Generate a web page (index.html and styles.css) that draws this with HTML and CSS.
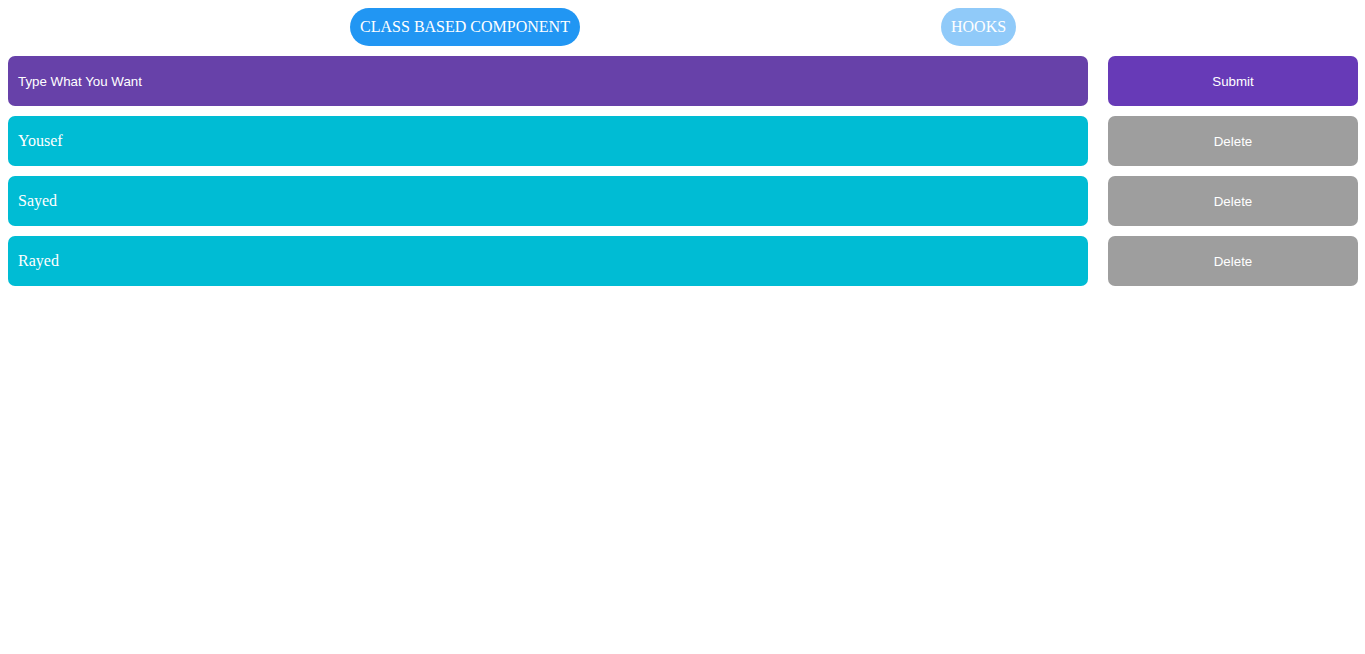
FILE: index.html
```html
<!DOCTYPE html>
<html>
<head>
<meta charset="utf-8">
<link rel="stylesheet" href="styles.css">
</head>
<body>
<div class="app">
  <div class="tabs">
    <button class="tab tab-active">CLASS BASED COMPONENT</button>
    <button class="tab tab-light">HOOKS</button>
  </div>
  <div class="row">
    <div class="field field-input">Type What You Want</div>
    <button class="btn btn-submit">Submit</button>
  </div>
  <div class="row">
    <div class="field field-item">Yousef</div>
    <button class="btn btn-delete">Delete</button>
  </div>
  <div class="row">
    <div class="field field-item">Sayed</div>
    <button class="btn btn-delete">Delete</button>
  </div>
  <div class="row">
    <div class="field field-item">Rayed</div>
    <button class="btn btn-delete">Delete</button>
  </div>
</div>
</body>
</html>
```

FILE: styles.css
```css
html, body {
  margin: 0;
  padding: 0;
  background: #ffffff;
}
body {
  padding: 8px;
}
.app {
  width: 1350px;
  display: flex;
  flex-direction: column;
  gap: 10px;
}
.tabs {
  display: flex;
  justify-content: center;
  gap: 361px;
}
.tab {
  height: 38px;
  border: none;
  border-radius: 19px;
  padding: 0 10px;
  color: #ffffff;
  font-family: "Liberation Serif", "Times New Roman", serif;
  font-size: 16px;
  line-height: 38px;
  cursor: pointer;
}
.tab-active {
  width: 230px;
  background: #2196f3;
}
.tab-light {
  width: 75px;
  background: #90caf9;
}
.row {
  display: grid;
  grid-template-columns: 1080px 250px;
  column-gap: 20px;
  height: 50px;
}
.field {
  border-radius: 7px;
  padding-left: 10px;
  display: flex;
  align-items: center;
  color: #ffffff;
}
.field-input {
  background: #6741a9;
  font-family: "Liberation Sans", Arial, sans-serif;
  font-size: 13.3333px;
  padding-left: 10px;
}
.field-item {
  background: #00bcd4;
  font-family: "Liberation Serif", "Times New Roman", serif;
  font-size: 16px;
}
.btn {
  border: none;
  border-radius: 7px;
  color: #ffffff;
  font-family: "Liberation Sans", Arial, sans-serif;
  font-size: 13.3333px;
  cursor: pointer;
}
.btn-submit {
  background: #673ab7;
}
.btn-delete {
  background: #9e9e9e;
}
```
